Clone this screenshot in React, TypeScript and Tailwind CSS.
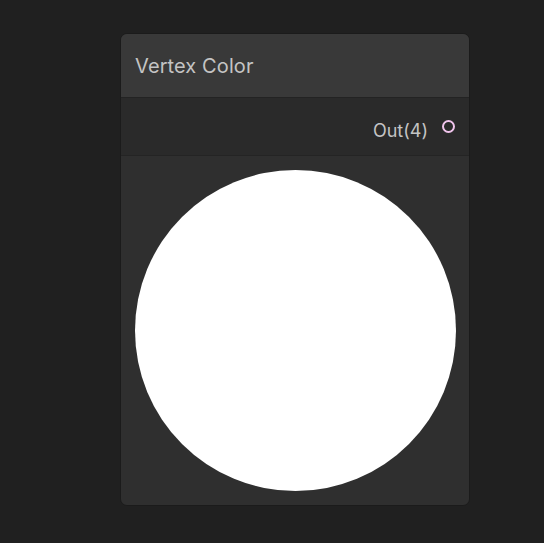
export default function App() {
  return (
    <div
      className="w-[544px] h-[543px] bg-[#202020] relative overflow-hidden"
      style={{ fontFamily: "Inter, 'Noto Sans', sans-serif" }}
    >
      <div className="absolute left-[120px] top-[33px] w-[350px] h-[473px] rounded-[7px] bg-[#2f2f2f] border border-[#1b1b1b] overflow-hidden flex flex-col">
        {/* Header */}
        <div className="h-[64px] bg-[#393939] border-b border-[#232323] flex items-center pl-[14px] flex-shrink-0">
          <span className="text-[20px] text-[#c4c4c4] tracking-[0.1px]">Vertex Color</span>
        </div>

        {/* Output port row */}
        <div className="h-[58px] bg-[#2a2a2a] border-b border-[#242424] flex items-center justify-end pr-[14px] flex-shrink-0">
          <span className="text-[18px] text-[#c4c4c4] mr-[14px] mt-[8px]">Out(4)</span>
          <span className="w-[13px] h-[13px] rounded-full border-2 border-[#f0c4ec]" />
        </div>

        {/* Preview */}
        <div className="flex-1 flex items-start justify-center pt-[14px]">
          <div className="w-[321px] h-[321px] rounded-full bg-white" />
        </div>
      </div>
    </div>
  );
}
